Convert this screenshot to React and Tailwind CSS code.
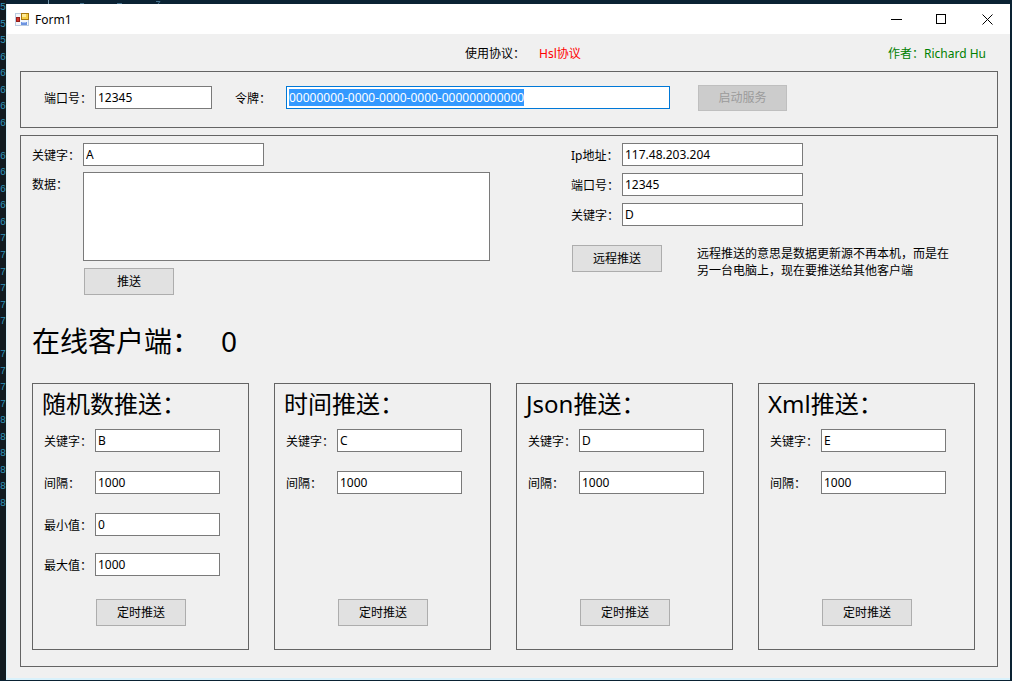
import { useEffect, useId, useRef } from "react";

const LINE_NUMBERS = [
  "5", "5", "5", "6", "6", "6", "6", "6", "", "6", "6", "6", "6", "6", "7", "7",
  "7", "7", "7", "7", "", "7", "7", "7", "7", "8", "8", "8", "8", "8", "8",
];

const CARDS = [
  { title: "随机数推送：", keyword: "B", interval: "1000", range: { min: "0", max: "1000" } },
  { title: "时间推送：", keyword: "C", interval: "1000" },
  { title: "Json推送：", keyword: "D", interval: "1000" },
  { title: "Xml推送：", keyword: "E", interval: "1000" },
];

function Field({ label, value, width, inputRef }) {
  const id = useId();
  return (
    <div className="flex items-center">
      <label htmlFor={id} className="w-[51px] shrink-0 whitespace-nowrap pt-0.5">
        {label}
      </label>
      <input
        id={id}
        ref={inputRef}
        type="text"
        defaultValue={value}
        className={`h-[23px] min-w-0 border border-[#7a7a7a] bg-white px-0.5 outline-none selection:bg-[#3399ff] selection:text-white focus:border-[#0078d7] ${width}`}
      />
    </div>
  );
}

function Button({ children }) {
  return (
    <button type="button" className="h-[27px] w-[90px] border border-[#adadad] bg-[#e1e1e1]">
      {children}
    </button>
  );
}

function TitleBar() {
  return (
    <header className="flex h-[30px] items-center bg-white pl-2">
      <svg viewBox="0 0 15 15" className="h-[15px] w-[15px]" aria-hidden="true">
        <rect x="0.5" y="1.5" width="13" height="12" fill="#f4f7fb" stroke="#b9cbe0" />
        <rect x="6.5" y="1.5" width="7" height="6" fill="#f5cf45" stroke="#a8780f" />
        <rect x="7" y="2" width="4" height="3" fill="#fdeb9a" />
        <rect x="1.5" y="5.5" width="3" height="4" fill="#d5322b" stroke="#93201c" />
        <rect x="6" y="10" width="6" height="3" fill="#6c93e0" />
        <rect x="7" y="10" width="4" height="1" fill="#a9c2f3" />
      </svg>
      <h1 className="ml-[5px] flex-1">Form1</h1>
      <button type="button" aria-label="Minimize" className="flex h-[30px] w-[46px] items-center justify-center">
        <svg viewBox="0 0 11 11" className="h-[11px] w-[11px]">
          <path d="M0 5.5H11" stroke="#000" />
        </svg>
      </button>
      <button type="button" aria-label="Maximize" className="flex h-[30px] w-[45px] items-center justify-center">
        <svg viewBox="0 0 11 11" className="h-[11px] w-[11px]">
          <rect x="0.5" y="0.5" width="9" height="9" fill="none" stroke="#000" />
        </svg>
      </button>
      <button type="button" aria-label="Close" className="flex h-[30px] w-[46px] items-center justify-center">
        <svg viewBox="0 0 11 11" className="h-[11px] w-[11px]">
          <path d="M0.5 0.5L10.5 10.5M10.5 0.5L0.5 10.5" stroke="#000" />
        </svg>
      </button>
    </header>
  );
}

function PushCard({ title, keyword, interval, range }) {
  return (
    <section className="flex min-h-[267px] flex-col border border-[#646464] pb-[23px] pl-[11px]">
      <h2 className="-ml-0.5 h-[45px] text-[24px] leading-[40px]">{title}</h2>
      <div className="flex flex-col gap-[19px]">
        <Field label="关键字：" value={keyword} width="w-[125px]" />
        <Field label="间隔：" value={interval} width="w-[125px]" />
        {range && (
          <div className="flex flex-col gap-[17px]">
            <Field label="最小值：" value={range.min} width="w-[125px]" />
            <Field label="最大值：" value={range.max} width="w-[125px]" />
          </div>
        )}
      </div>
      <div className="mt-auto pl-[52px]">
        <Button>定时推送</Button>
      </div>
    </section>
  );
}

export default function App() {
  const tokenRef = useRef(null);
  useEffect(() => {
    tokenRef.current.focus();
    tokenRef.current.select();
  }, []);

  return (
    <div
      lang="zh-CN"
      className="flex min-h-screen flex-col bg-[#0a2233] font-['Noto_Sans','Noto_Sans_CJK_SC',sans-serif] text-[12px] leading-[17px] text-black"
    >
      <svg viewBox="0 0 200 4" className="h-1 w-[200px]" aria-hidden="true">
        <path d="M48.5 0V4" stroke="#6f93aa" />
        <path d="M80 3.5H84M117 3.5H122M156 1.5H160L158 4" stroke="#45718d" fill="none" />
      </svg>
      <div className="flex flex-1 pb-px pr-0.5">
        <div
          aria-hidden="true"
          className="-mt-1 flex w-1.5 shrink-0 flex-col bg-[#111a20] font-['Liberation_Mono',monospace] text-[10px] text-[#2f8fb5]"
        >
          <div className="flex h-[512px] flex-col">
            {LINE_NUMBERS.map((n, i) => (
              <span key={i} className="flex flex-1 items-center leading-[14px]">{n}</span>
            ))}
          </div>
        </div>

        <main className="flex min-w-0 flex-1 flex-col border-b-2 border-l border-[#d9f1fb] bg-[#f0f0f0]">
          <TitleBar />
          <div className="flex flex-col pb-2.5 pl-[13px] pr-3">
            <div className="flex h-[37px] items-center gap-3.5 pl-[445px] pr-3 pt-0.5">
              <span>使用协议：</span>
              <span className="text-[#ff0000]">Hsl协议</span>
              <span className="ml-auto text-[#008000]">作者：Richard Hu</span>
            </div>

            <section className="flex h-[57px] items-center gap-[23px] border border-[#646464] pb-1 pl-[23px]">
              <Field label="端口号：" value="12345" width="w-[117px]" />
              <Field
                label="令牌："
                value="00000000-0000-0000-0000-000000000000"
                width="w-[384px]"
                inputRef={tokenRef}
              />
              <button
                type="button"
                disabled
                className="ml-[5px] h-[26px] w-[89px] border border-[#bfbfbf] bg-[#cccccc] text-[#9b9b9b]"
              >
                启动服务
              </button>
            </section>

            <section className="mt-[7px] border border-[#646464] pb-4 pl-[11px] pr-[22px] pt-[7px]">
              <div className="flex gap-[81px]">
                <div className="flex flex-col gap-1.5">
                  <Field label="关键字：" value="A" width="w-[181px]" />
                  <div className="flex">
                    <label htmlFor="payload" className="w-[51px] shrink-0 pt-1">
                      数据：
                    </label>
                    <textarea
                      id="payload"
                      className="h-[89px] w-[407px] resize-none border border-[#7a7a7a] bg-white px-0.5 outline-none"
                    />
                  </div>
                  <div className="pl-[52px] pt-px">
                    <Button>推送</Button>
                  </div>
                </div>
                <div className="flex flex-col gap-[7px]">
                  <Field label="Ip地址：" value="117.48.203.204" width="w-[181px]" />
                  <Field label="端口号：" value="12345" width="w-[181px]" />
                  <Field label="关键字：" value="D" width="w-[181px]" />
                  <div className="mt-3 flex gap-[35px] pl-px">
                    <Button>远程推送</Button>
                    <p className="w-[254px]">
                      远程推送的意思是数据更新源不再本机，而是在另一台电脑上，现在要推送给其他客户端
                    </p>
                  </div>
                </div>
              </div>

              <p className="mt-6 flex h-[44px] items-center gap-[21px] text-[28px] leading-[44px]">
                <span>在线客户端：</span>
                <span>0</span>
              </p>

              <div className="mt-5 grid grid-cols-4 gap-[25px]">
                {CARDS.map((card) => (
                  <PushCard key={card.title} {...card} />
                ))}
              </div>
            </section>
          </div>
        </main>
      </div>
    </div>
  );
}
